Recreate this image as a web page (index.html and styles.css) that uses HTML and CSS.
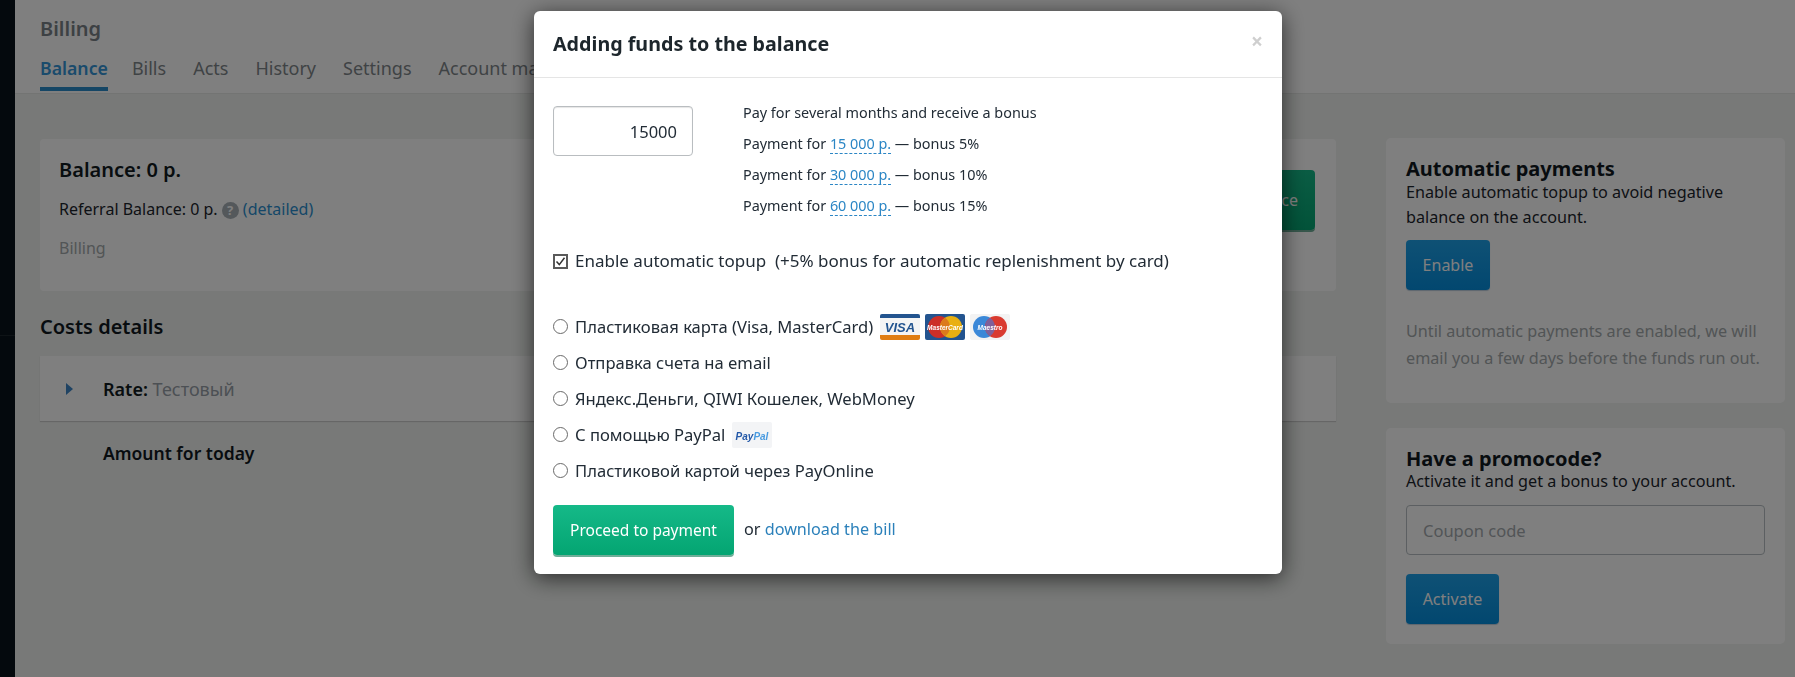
FILE: index.html
```html
<!DOCTYPE html>
<html lang="en">

<head>
  <meta charset="UTF-8">
  <title>Billing</title>
  <link rel="stylesheet" href="styles.css">
</head>

<body>
  <div class="app">
    <div class="sidebar"><div class="sidebar_line"></div></div>
    <div class="main">
      <header class="top">
        <h1 class="top_title">Billing</h1>
        <nav class="tabs">
          <a class="tab tab_active">Balance</a>
          <a class="tab">Bills</a>
          <a class="tab">Acts</a>
          <a class="tab">History</a>
          <a class="tab">Settings</a>
          <a class="tab">Account management</a>
        </nav>
      </header>
      <div class="content">
        <div class="col_left">
          <section class="card balance">
            <div class="balance_info">
              <h2 class="balance_title">Balance: 0 р.</h2>
              <p class="balance_ref">Referral Balance: 0 р. <span class="hint">?</span> <a class="page_link">(detailed)</a></p>
              <p class="muted balance_name">Billing</p>
            </div>
            <button class="btn btn_green balance_btn">Add to balance</button>
          </section>
          <h2 class="costs_title">Costs details</h2>
          <div class="rate">
            <span class="rate_arrow"></span>
            <span class="rate_text"><b>Rate:</b> <span class="rate_name">Тестовый</span></span>
          </div>
          <p class="amount">Amount for today</p>
        </div>
        <aside class="col_right">
          <section class="side_card auto_card">
            <h3 class="side_title">Automatic payments</h3>
            <p class="side_text">Enable automatic topup to avoid negative balance on the account.</p>
            <button class="btn btn_blue enable_btn">Enable</button>
            <p class="muted side_note">Until automatic payments are enabled, we will email you a few days before the funds run out.</p>
          </section>
          <section class="side_card promo_card">
            <h3 class="side_title">Have a promocode?</h3>
            <p class="side_text promo_text">Activate it and get a bonus to your account.</p>
            <input class="coupon" type="text" placeholder="Coupon code">
            <button class="btn btn_blue activate_btn">Activate</button>
          </section>
        </aside>
      </div>
    </div>
  </div>

  <div class="overlay">
    <div class="modal">
      <div class="modal_head">
        <h2 class="modal_title">Adding funds to the balance</h2>
        <span class="modal_close">×</span>
      </div>
      <div class="modal_body">
        <div class="sum_row">
          <input class="sum_input" type="text" value="15000">
          <ul class="bonus_list">
            <li>Pay for several months and receive a bonus</li>
            <li>Payment for <a class="dash_link">15 000 р.</a> — bonus 5%</li>
            <li>Payment for <a class="dash_link">30 000 р.</a> — bonus 10%</li>
            <li>Payment for <a class="dash_link">60 000 р.</a> — bonus 15%</li>
          </ul>
        </div>
        <div class="auto_row">
          <svg class="check" width="15" height="15" viewBox="0 0 15 15">
            <rect x="1" y="1" width="13" height="13" fill="#fff" stroke="#5a5a5a" stroke-width="2"/>
            <path d="M3.5 7.5 L6.3 10.6 L11.5 3.8" fill="none" stroke="#333" stroke-width="1.5"/>
          </svg>
          <span>Enable automatic topup&nbsp; (+5% bonus for automatic replenishment by card)</span>
        </div>
        <div class="methods">
          <label class="method"><input class="radio" type="radio" name="pay"><span class="method_name">Пластиковая карта (Visa, MasterCard)</span>
            <svg class="pay_icon" width="40" height="26" viewBox="0 0 40 26">
              <rect width="40" height="26" rx="2" fill="#f4f4f4"/>
              <path d="M0 4V2a2 2 0 0 1 2-2h36a2 2 0 0 1 2 2v2z" fill="#23548f"/>
              <path d="M0 21h40v3a2 2 0 0 1-2 2H2a2 2 0 0 1-2-2z" fill="#e07d12"/>
              <text class="visa_text" x="20" y="17.5" text-anchor="middle">VISA</text>
            </svg>
            <svg class="pay_icon" width="40" height="26" viewBox="0 0 40 26">
              <rect width="40" height="26" rx="2" fill="#23548f"/>
              <circle cx="14" cy="13" r="11" fill="#cc2f27"/>
              <circle cx="26" cy="13" r="11" fill="#e9b011"/>
              <path d="M20 3.8a11 11 0 0 1 0 18.4a11 11 0 0 1 0-18.4z" fill="#dc7a1c"/>
              <text class="card_text" x="20" y="15.5" text-anchor="middle">MasterCard</text>
            </svg>
            <svg class="pay_icon" width="40" height="26" viewBox="0 0 40 26">
              <rect width="40" height="26" rx="2" fill="#f3f3f3"/>
              <circle cx="14" cy="13" r="11" fill="#3b88d8"/>
              <circle cx="26" cy="13" r="11" fill="#d93a2f"/>
              <path d="M20 3.8a11 11 0 0 1 0 18.4a11 11 0 0 1 0-18.4z" fill="#80609a"/>
              <text class="card_text" x="20" y="15.5" text-anchor="middle">Maestro</text>
            </svg>
          </label>
          <label class="method"><input class="radio" type="radio" name="pay"><span class="method_name">Отправка счета на email</span></label>
          <label class="method"><input class="radio" type="radio" name="pay"><span class="method_name">Яндекс.Деньги, QIWI Кошелек, WebMoney</span></label>
          <label class="method"><input class="radio" type="radio" name="pay"><span class="method_name">С помощью PayPal</span>
            <svg class="pay_icon" width="40" height="26" viewBox="0 0 40 26">
              <rect width="40" height="26" rx="2" fill="#f3f4f6"/>
              <text class="paypal_text" x="20" y="17.5" text-anchor="middle">Pay<tspan fill="#4a9be0">Pal</tspan></text>
            </svg>
          </label>
          <label class="method"><input class="radio" type="radio" name="pay"><span class="method_name">Пластиковой картой через PayOnline</span></label>
        </div>
        <div class="pay_row">
          <button class="btn btn_green proceed_btn">Proceed to payment</button>
          <span class="pay_or">or <a class="modal_link">download the bill</a></span>
        </div>
      </div>
    </div>
  </div>
</body>

</html>
```

FILE: styles.css
```css
* {
  box-sizing: border-box;
}

html, body {
  margin: 0;
  height: 100%;
  overflow: hidden;
}

body {
  font-family: "Noto Sans", "Open Sans", sans-serif;
  font-size: 16px;
  color: #2a333b;
  background: #f0f3f0;
}

h1, h2, h3, p, ul {
  margin: 0;
  padding: 0;
}

.app {
  display: flex;
  height: 677px;
}

.sidebar {
  flex: 0 0 15px;
  padding-top: 335px;
  background: #08121a;
}

.sidebar_line {
  height: 1px;
  background: #1c262c;
}

.main {
  flex: 1;
  min-width: 0;
}

/* header */
.top {
  height: 94px;
  padding: 17px 0 0 25px;
  background: #fff;
  border-bottom: 1px solid #e6e8e6;
}

.top_title {
  font-size: 20px;
  line-height: 23px;
  font-weight: 600;
  color: #7a8288;
}

.tabs {
  display: flex;
  gap: 27px;
  margin-top: 16px;
}

.tab {
  height: 35px;
  font-size: 18px;
  line-height: 24px;
  color: #7e868a;
  white-space: nowrap;
}

.tab_active {
  margin-right: -3px;
  font-weight: 600;
  font-size: 17.7px;
  color: #3596d8;
  border-bottom: 4px solid #2a8ccb;
}

/* page columns */
.content {
  display: flex;
  padding: 45px 13px 0 25px;
}

.col_left {
  flex: 0 0 1296px;
}

.col_right {
  flex: 0 0 397px;
  margin-left: 50px;
}

.card {
  margin-left: 0;
  height: 152px;
  padding: 19px 21px 0 19px;
  display: flex;
  justify-content: space-between;
  background: #fff;
  border-radius: 4px;
}

.balance_title {
  font-size: 20px;
  line-height: 24px;
  font-weight: 600;
  color: #111a20;
}

.balance_ref {
  margin-top: 16px;
  line-height: 22px;
  font-size: 16px;
  color: #1c252c;
}

.balance_name {
  margin-top: 17px;
  line-height: 22px;
  font-size: 16px;
}

.muted {
  color: #a4aaac;
}

.hint {
  display: inline-block;
  width: 17px;
  height: 17px;
  border-radius: 50%;
  background: #a8b0b6;
  color: #fff;
  font-size: 13px;
  font-weight: 700;
  line-height: 17px;
  text-align: center;
}

.page_link {
  color: #2a8fd0;
}

.btn {
  border: 0;
  border-radius: 4px;
  font-family: inherit;
  color: #fff;
  white-space: nowrap;
}

.btn_green {
  background: linear-gradient(#15b988, #04a572);
  box-shadow: 0 2px 0 #6fae98;
}

.btn_blue {
  background: linear-gradient(#1ea2ea, #058fdf);
  box-shadow: 0 1px 1px #bcd;
}

.balance_btn {
  width: 200px;
  height: 60px;
  margin-top: 12px;
  padding-right: 17px;
  font-size: 16px;
  text-align: right;
}

.costs_title {
  margin-top: 24px;
  font-size: 20px;
  line-height: 24px;
  font-weight: 600;
  color: #10191f;
}

.rate {
  display: flex;
  align-items: center;
  height: 65px;
  margin-top: 17px;
  padding-left: 26px;
  background: #fff;
  box-shadow: 0 1px 1px #ccc;
}

.rate_arrow {
  width: 0;
  height: 0;
  border-top: 6px solid transparent;
  border-bottom: 6px solid transparent;
  border-left: 7px solid #3f86c6;
}

.rate_text {
  margin-left: 30px;
  font-size: 18px;
  color: #111a20;
}

.rate_text b {
  font-weight: 600;
}

.rate_name {
  color: #98a0a8;
}

.amount {
  margin: 21px 0 0 63px;
  font-size: 17.5px;
  line-height: 22px;
  font-weight: 600;
  color: #10191f;
}

/* right side */
.side_card {
  padding: 20px 20px 0;
  background: #fff;
  border-radius: 5px;
  margin-top: -1px;
}

.auto_card {
  height: 265px;
}

.promo_card {
  height: 216px;
  margin-top: 25px;
}

.side_title {
  font-size: 20px;
  line-height: 22px;
  font-weight: 700;
  color: #10191f;
}

.side_text {
  font-size: 16.2px;
  line-height: 25px;
  color: #1c252c;
}

.enable_btn {
  display: block;
  width: 84px;
  height: 50px;
  margin-top: 10px;
  font-size: 16px;
}

.side_note {
  margin-top: 28px;
  font-size: 16.2px;
  line-height: 27px;
}

.promo_text {
  line-height: 22px;
}

.coupon {
  display: block;
  width: 359px;
  height: 50px;
  margin-top: 13px;
  padding: 0 16px;
  font-family: inherit;
  font-size: 16.5px;
  border: 1px solid #b8bec4;
  border-radius: 4px;
}

.coupon::placeholder {
  color: #a4aaae;
}

.activate_btn {
  display: block;
  width: 93px;
  height: 50px;
  margin-top: 19px;
  font-size: 16px;
}

/* modal */
.overlay {
  position: fixed;
  top: 0;
  left: 0;
  right: 0;
  bottom: 0;
  padding: 11px 0 0 534px;
  background: rgba(0, 0, 0, 0.5);
}

.modal {
  width: 748px;
  height: 563px;
  background: #fff;
  border-radius: 6px;
  box-shadow: 0 4px 22px rgba(0, 0, 0, 0.65);
}

.modal_head {
  display: flex;
  justify-content: space-between;
  align-items: center;
  height: 67px;
  padding: 0 19px;
  border-bottom: 1px solid #e5e5e5;
}

.modal_title {
  margin-bottom: 2px;
  font-size: 19.7px;
  font-weight: 700;
  color: #1d262c;
}

.modal_close {
  margin-bottom: 6px;
  font-size: 21px;
  font-weight: 700;
  color: #cfcfcf;
}

.modal_body {
  padding: 28px 19px 0;
  color: #222c36;
}

.sum_row {
  display: flex;
}

.sum_input {
  flex: 0 0 140px;
  width: 140px;
  min-width: 0;
  height: 50px;
  padding: 0 15px;
  font-family: inherit;
  font-size: 16.5px;
  color: #222c36;
  text-align: right;
  border: 1px solid #b9bdc0;
  border-radius: 4px;
  box-shadow: inset 0 1px 1px rgba(0, 0, 0, 0.1);
}

.bonus_list {
  margin: -9px 0 0 50px;
  list-style: none;
  font-size: 14.4px;
  line-height: 31px;
}

.dash_link {
  color: #2b86c5;
  border-bottom: 1px dashed #2b86c5;
}

.auto_row {
  display: flex;
  align-items: center;
  gap: 7px;
  margin-top: 29px;
  font-size: 17px;
  line-height: 22px;
  white-space: nowrap;
}

.methods {
  margin-top: 36px;
}

.method {
  display: flex;
  align-items: center;
  height: 36px;
  font-size: 16.6px;
  white-space: nowrap;
}

.method_name {
  margin-right: 2px;
}

.radio {
  appearance: none;
  flex: 0 0 15px;
  width: 15px;
  height: 15px;
  margin: 0 7px 0 0;
  border: 1.5px solid #6a6a6a;
  border-radius: 50%;
  background: #fff;
}

.pay_icon {
  margin: 2px 0 0 5px;
}

.visa_text {
  font: italic 700 13px "Liberation Sans", sans-serif;
  fill: #23548f;
}

.card_text {
  font: italic 700 6.5px "Liberation Sans", sans-serif;
  fill: #fff;
}

.paypal_text {
  font: italic 700 10px "Liberation Sans", sans-serif;
  fill: #2358a8;
}

.pay_row {
  display: flex;
  align-items: center;
  margin-top: 17px;
}

.proceed_btn {
  width: 181px;
  height: 50px;
  padding-bottom: 2px;
  font-size: 15.5px;
}

.pay_or {
  margin: 0 0 2px 10px;
  font-size: 16.2px;
}

.modal_link {
  color: #2b80ba;
}
```
